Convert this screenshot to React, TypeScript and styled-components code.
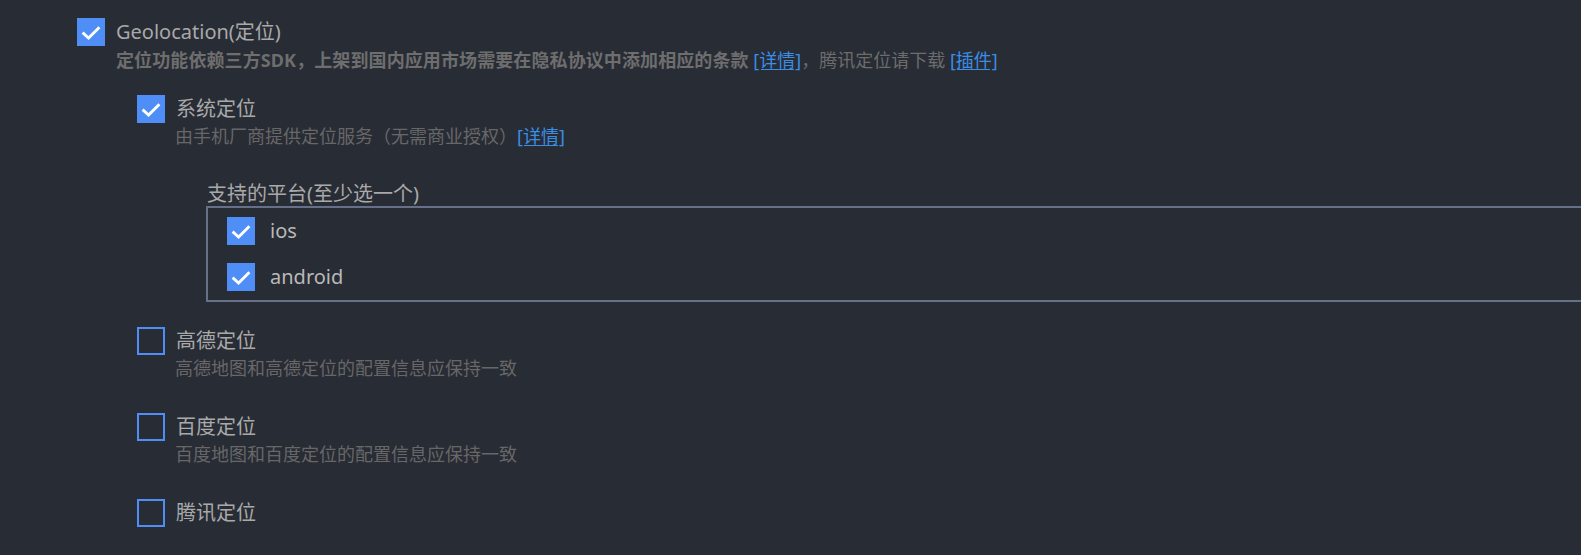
import React from "react";
import styled, { createGlobalStyle } from "styled-components";

const GlobalStyle = createGlobalStyle`
  html, body {
    margin: 0;
    padding: 0;
    background: #282c35;
    overflow-x: hidden;
  }
  body {
    font-family: "Noto Sans", "Noto Sans CJK SC", sans-serif;
  }
`;

const Page = styled.div`
  padding: 18px 0 40px 77px;
  min-height: 555px;
  box-sizing: border-box;
`;

const OptionRow = styled.div<{ $gap?: number; $height?: number }>`
  display: flex;
  align-items: center;
  gap: ${(p) => p.$gap ?? 11}px;
  height: ${(p) => p.$height ?? 28}px;
`;

const Box = styled.span<{ $checked: boolean }>`
  flex: none;
  width: 28px;
  height: 28px;
  box-sizing: border-box;
  border: 2px solid #4f8ef7;
  background: ${(p) => (p.$checked ? "#4f8ef7" : "transparent")};
  display: flex;
  align-items: center;
  justify-content: center;
  svg {
    display: block;
  }
`;

const Label = styled.span<{ $light?: boolean }>`
  font-size: 20px;
  line-height: 28px;
  color: ${(p) => (p.$light ? "#b9b9b9" : "#a9a9a9")};
  white-space: nowrap;
`;

const MainDesc = styled.div`
  margin-left: 39px;
  font-size: 18px;
  line-height: 28px;
  color: #6c6c6c;
  white-space: nowrap;
`;

const Strong = styled.span`
  font-weight: 700;
  color: #6e6e6e;
  letter-spacing: 0.1px;
`;

const Link = styled.a`
  color: #3a8ee6;
  text-decoration: underline;
  text-underline-offset: 2px;
  cursor: pointer;
`;

const SubList = styled.div`
  margin-top: 21px;
  margin-left: 60px;
  display: flex;
  flex-direction: column;
  gap: 26px;
`;

const SubItem = styled.div`
  display: flex;
  flex-direction: column;
`;

const SubDesc = styled.div`
  margin-left: 38px;
  margin-bottom: 6px;
  font-size: 18px;
  line-height: 26px;
  color: #676767;
  white-space: nowrap;
`;

const PlatformGroup = styled.div`
  margin-top: 26px;
  margin-left: 69px;
  margin-bottom: -1px;
`;

const Legend = styled.div`
  padding-left: 1px;
  font-size: 20px;
  line-height: 25px;
  color: #a9a9a9;
  white-space: nowrap;
`;

const PlatformBox = styled.div`
  border: 2px solid #667089;
  margin-right: -60px;
  padding-left: 19px;
  display: flex;
  flex-direction: column;
`;

const Check = ({ checked }: { checked: boolean }) => (
  <Box $checked={checked}>
    {checked && (
      <svg width="24" height="24" viewBox="0 0 24 24">
        <polyline
          points="3.6,12.6 9.6,18 20.4,7.2"
          fill="none"
          stroke="#ffffff"
          strokeWidth="2.8"
          strokeLinejoin="miter"
        />
      </svg>
    )}
  </Box>
);

export default function App() {
  return (
    <>
      <GlobalStyle />
      <Page>
        <OptionRow>
          <Check checked />
          <Label>Geolocation(定位)</Label>
        </OptionRow>
        <MainDesc>
          <Strong>定位功能依赖三方SDK，上架到国内应用市场需要在隐私协议中添加相应的条款</Strong>{" "}
          <Link>[详情]</Link>，腾讯定位请下载 <Link>[插件]</Link>
        </MainDesc>

        <SubList>
          <SubItem>
            <OptionRow>
              <Check checked />
              <Label>系统定位</Label>
            </OptionRow>
            <SubDesc>
              由手机厂商提供定位服务（无需商业授权）<Link>[详情]</Link>
            </SubDesc>
            <PlatformGroup>
              <Legend>支持的平台(至少选一个)</Legend>
              <PlatformBox>
                <OptionRow $gap={15} $height={46}>
                  <Check checked />
                  <Label $light>ios</Label>
                </OptionRow>
                <OptionRow $gap={15} $height={46}>
                  <Check checked />
                  <Label $light>android</Label>
                </OptionRow>
              </PlatformBox>
            </PlatformGroup>
          </SubItem>

          <SubItem>
            <OptionRow>
              <Check checked={false} />
              <Label>高德定位</Label>
            </OptionRow>
            <SubDesc>高德地图和高德定位的配置信息应保持一致</SubDesc>
          </SubItem>

          <SubItem>
            <OptionRow>
              <Check checked={false} />
              <Label>百度定位</Label>
            </OptionRow>
            <SubDesc>百度地图和百度定位的配置信息应保持一致</SubDesc>
          </SubItem>

          <SubItem>
            <OptionRow>
              <Check checked={false} />
              <Label>腾讯定位</Label>
            </OptionRow>
          </SubItem>
        </SubList>
      </Page>
    </>
  );
}
